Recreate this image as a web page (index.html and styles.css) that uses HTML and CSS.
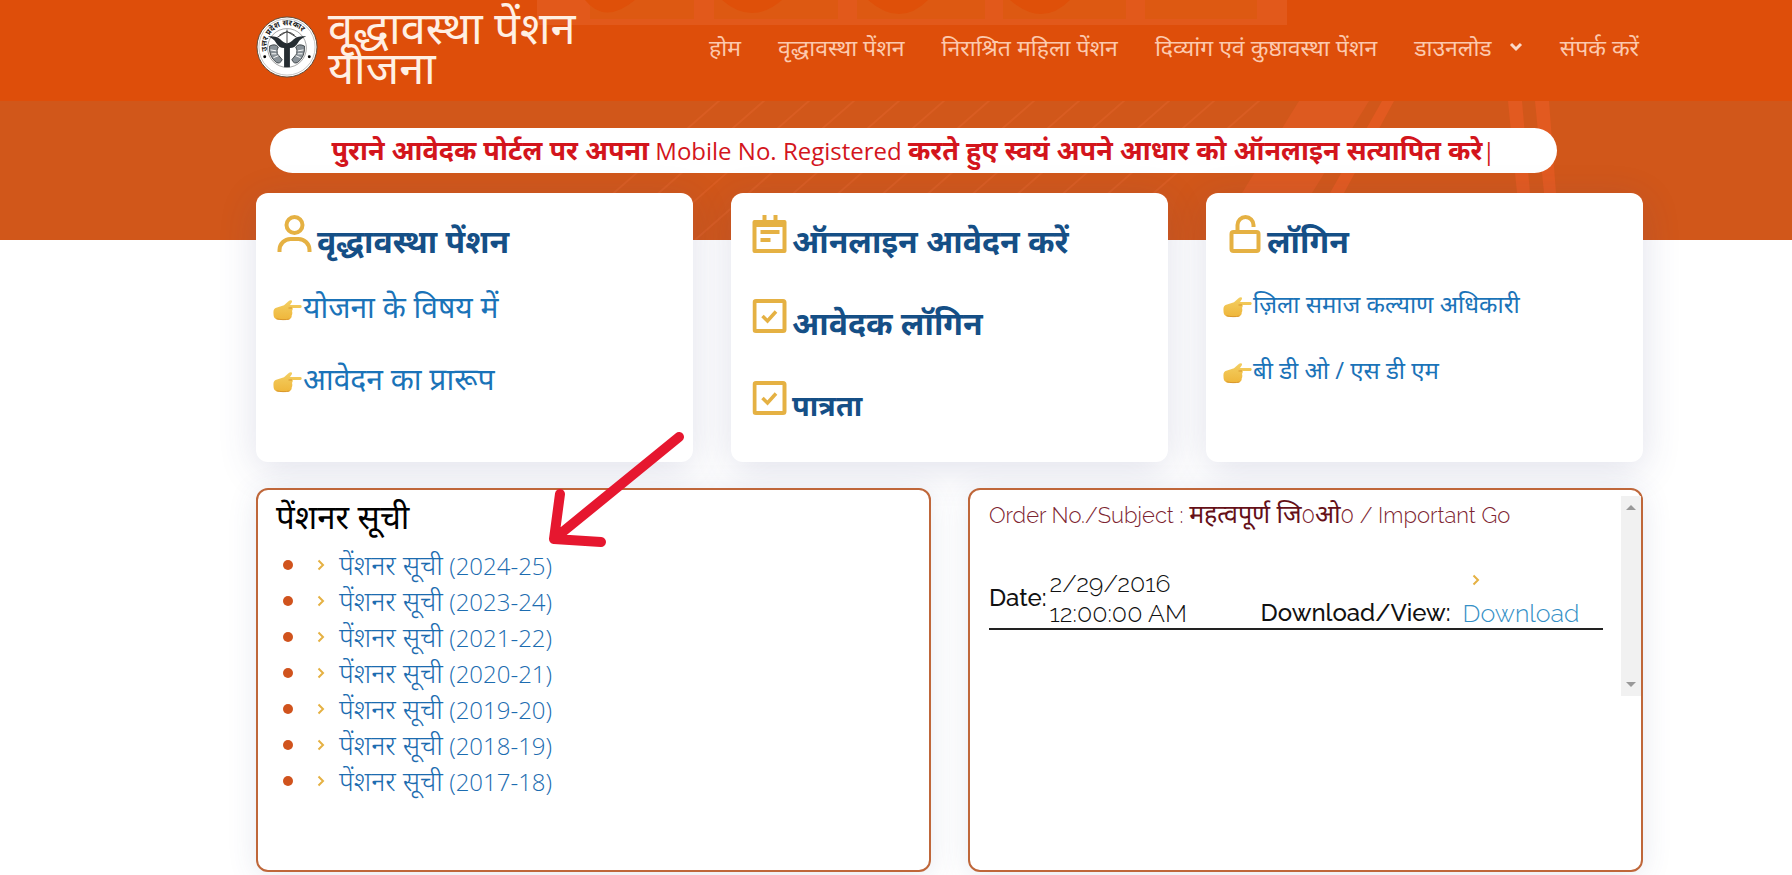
FILE: index.html
```html
<!DOCTYPE html>
<html lang="hi">
<head>
<meta charset="utf-8">
<title>वृद्धावस्था पेंशन योजना</title>
<meta name="viewport" content="width=device-width, initial-scale=1">
<link rel="stylesheet" href="styles.css">
</head>
<body>
<svg width="0" height="0" class="defs" aria-hidden="true">
  <defs>
    <linearGradient id="skin" x1="0" y1="0" x2="0" y2="1"><stop offset="0" stop-color="#f3cf63"/><stop offset="1" stop-color="#efb63a"/></linearGradient>
    <symbol id="hand" viewBox="0 0 30 22">
      <path d="M28 6H17.500L19.500 3C20 .8 17.500 1 16 2.200L11.500 6.200 3 9C1 10 .8 12 1 15c.2 3.400 1 4.900 4 5.400 3.800.6 8 .8 11 .2 2.200-.5 3.400-2 3.200-4 .8-1.600.8-3.300.3-4.700.6-.7.900-1.900.7-2.900H28c1.600 0 1.600-3 0-3z" fill="url(#skin)"/>
      <path d="M19.500 9H16M4 19.800c4 1 9 1.200 13 .2" fill="none" stroke="#d9972c" stroke-width="1"/>
    </symbol>
    <symbol id="check" viewBox="0 0 36 36">
      <rect x="2" y="2" width="30" height="30" rx="1.500" fill="none" stroke="#e5b143" stroke-width="4"/>
      <path d="M10 17l5 5 8.500-9.500" fill="none" stroke="#e5b143" stroke-width="3.500"/>
    </symbol>
    <symbol id="chev" viewBox="0 0 8 12">
      <path d="M1.500 1.500L6 6l-4.500 4.500" fill="none" stroke="#e5b143" stroke-width="2"/>
    </symbol>
  </defs>
</svg>

<svg class="hero" viewBox="0 0 1792 240" preserveAspectRatio="none" aria-hidden="true">
  <rect width="1792" height="240" fill="#d1571a"/>
  <path d="M560 240L720 100M605 240L765 100M650 240L810 100M695 240L855 100M740 240L900 100M785 240L945 100M830 240L990 100M875 240L1035 100M920 240L1080 100M965 240L1125 100M1010 240L1170 100M1055 240L1215 100M1100 240L1260 100" opacity=".7" stroke="#dd6026" stroke-width="2"/>
  <path d="M1299 101h70L1312 193h-70z" fill="#dd5a20"/>
  <path d="M1382 101h12l-50 92h-14zM1508 101h14l8 92h-13zM1535 101h14l7 92h-12z" fill="#e25a20"/>
  <rect width="1792" height="101" fill="#de4e0a"/>
  <rect x="537" width="750" height="25" fill="#e2591b"/>
  <g fill="#dd5912">
    <rect x="590" width="104" height="19"/><rect x="714" width="124" height="19"/><rect x="857" width="128" height="19"/><rect x="1003" width="123" height="19"/><rect x="1145" width="112" height="19"/>
  </g>
  <path d="M585 0q20 25 50 0zM722 0q30 26 60 0zM868 0q32 28 60 0zM1010 0q32 28 60 0z" fill="#df5009"/>
</svg>

<header class="header">
  <a class="brand" href="#">
    <svg class="emblem" viewBox="0 0 64 64" aria-hidden="true">
      <defs><path id="arc" d="M12 37a21 21 0 1 1 40 0"/></defs>
      <circle cx="32" cy="32" r="31" fill="#fff" stroke="#5c4a3a" stroke-width="1"/>
      <circle cx="32" cy="32" r="29" fill="none" stroke="#999" stroke-width=".6"/>
      <circle cx="32" cy="33" r="20" fill="none" stroke="#666" stroke-width=".6"/>
      <text class="emblem-text"><textPath href="#arc" startOffset="1">उत्तर प्रदेश सरकार</textPath></text>
      <path d="M12 21q9-1 13 3t7 4q3 0 7-4t13-3q-6 2-9 7t-8 5v20h-6V33q-5 0-8-5t-9-7z" fill="#252c31"/>
      <path d="M24 20q8-7 16 0M32 14v14M22 22l10-6 10 6" fill="none" stroke="#444" stroke-width="1"/>
      <path d="M14 31q6-3 9 1-2 3-1 7l5 6q-2 5-6 3-8-6-7-17zM50 31q-6-3-9 1 2 3 1 7l-5 6q2 5 6 3 8-6 7-17z" fill="#8a9298" stroke="#262c30" stroke-width=".8"/>
      <path d="M15 35l6 1M16 39l5 0M18 43l5-2M49 35l-6 1M48 39l-5 0M46 43l-5-2" stroke="#fff"/>
      <circle cx="9" cy="42" r="1.500"/><circle cx="55" cy="42" r="1.500"/>
    </svg>
    <span class="brand-name">वृद्धावस्था पेंशन योजना</span>
  </a>
  <nav class="nav">
    <a href="#">होम</a>
    <a href="#">वृद्धावस्था पेंशन</a>
    <a href="#">निराश्रित महिला पेंशन</a>
    <a href="#">दिव्यांग एवं कुष्ठावस्था पेंशन</a>
    <a href="#" class="drop">डाउनलोड
      <svg width="14" height="10" viewBox="0 0 14 10" aria-hidden="true"><path d="M2 2l5 5 5-5" fill="none" stroke="#fbd9c8" stroke-width="3"/></svg></a>
    <a href="#">संपर्क करें</a>
  </nav>
</header>

<main class="main">
  <p class="notice"><b>पुराने आवेदक पोर्टल पर अपना</b> Mobile No. Registered <b>करते हुए स्वयं अपने आधार को ऑनलाइन सत्यापित करे</b>|</p>

  <section class="cards">
    <article class="card">
      <h2 class="title"><svg class="ico" viewBox="0 0 36 40" aria-hidden="true"><g fill="none" stroke="#e5b143" stroke-width="4"><circle cx="18" cy="11" r="8"/><path d="M3 38v-2a11 11 0 0 1 11-11h8a11 11 0 0 1 11 11v2"/></g></svg>वृद्धावस्था पेंशन</h2>
      <ul class="links large">
        <li><svg class="hand" aria-hidden="true"><use href="#hand"/></svg><a href="#">योजना के विषय में</a></li>
        <li><svg class="hand" aria-hidden="true"><use href="#hand"/></svg><a href="#">आवेदन का प्रारूप</a></li>
      </ul>
    </article>
    <article class="card stack">
      <h2 class="title"><svg class="ico" viewBox="0 0 36 40" aria-hidden="true"><path d="M3 8h30v29H3z" fill="none" stroke="#e5b143" stroke-width="4" stroke-linejoin="round"/><path d="M3 6h30v7H3zM11 1h4v6h-4zM22 1h4v6h-4zM9 16h19v4H9zM9 24h10v4H9z" fill="#e5b143"/></svg><a href="#">ऑनलाइन आवेदन करें</a></h2>
      <h2 class="title"><svg class="ico" viewBox="0 0 36 40" aria-hidden="true"><use href="#check" x="1" y="3" width="36" height="36"/></svg><a href="#">आवेदक लॉगिन</a></h2>
      <h2 class="title small"><svg class="ico" viewBox="0 0 36 40" aria-hidden="true"><use href="#check" x="1" y="3" width="36" height="36"/></svg><a href="#">पात्रता</a></h2>
    </article>
    <article class="card">
      <h2 class="title"><svg class="ico" viewBox="0 0 36 40" aria-hidden="true"><g fill="none" stroke="#e5b143" stroke-width="4"><rect x="5" y="18" width="27" height="19" rx="2"/><path d="M11 18v-7a8 8 0 0 1 16 0v2"/></g></svg>लॉगिन</h2>
      <ul class="links">
        <li><svg class="hand" aria-hidden="true"><use href="#hand"/></svg><a href="#">ज़िला समाज कल्याण अधिकारी</a></li>
        <li><svg class="hand" aria-hidden="true"><use href="#hand"/></svg><a href="#">बी डी ओ / एस डी एम</a></li>
      </ul>
    </article>
  </section>

  <section class="panels">
    <div class="panel">
      <h2 class="panel-title">पेंशनर सूची</h2>
      <ul class="years">
        <li><svg class="chev" aria-hidden="true"><use href="#chev"/></svg><a href="#"><span>पेंशनर सूची</span> (2024-25)</a></li>
        <li><svg class="chev" aria-hidden="true"><use href="#chev"/></svg><a href="#"><span>पेंशनर सूची</span> (2023-24)</a></li>
        <li><svg class="chev" aria-hidden="true"><use href="#chev"/></svg><a href="#"><span>पेंशनर सूची</span> (2021-22)</a></li>
        <li><svg class="chev" aria-hidden="true"><use href="#chev"/></svg><a href="#"><span>पेंशनर सूची</span> (2020-21)</a></li>
        <li><svg class="chev" aria-hidden="true"><use href="#chev"/></svg><a href="#"><span>पेंशनर सूची</span> (2019-20)</a></li>
        <li><svg class="chev" aria-hidden="true"><use href="#chev"/></svg><a href="#"><span>पेंशनर सूची</span> (2018-19)</a></li>
        <li><svg class="chev" aria-hidden="true"><use href="#chev"/></svg><a href="#"><span>पेंशनर सूची</span> (2017-18)</a></li>
      </ul>
      <svg class="pointer" viewBox="0 0 136 120" aria-hidden="true"><path d="M131 7L6 109M12 64L6 109L53 112" fill="none" stroke="#e6172f" stroke-width="10" stroke-linecap="round" stroke-linejoin="round"/></svg>
    </div>
    <div class="panel orders">
      <div class="order-list">
        <p class="subject">Order No./Subject : <span>महत्वपूर्ण जि</span>0<span>ओ</span>0 / Important Go</p>
        <div class="order">
          <b class="date-label">Date:</b>
          <span class="date">2/29/2016 12:00:00 AM</span>
          <b class="view-label">Download/View:</b>
          <span class="view"><svg class="chev" aria-hidden="true"><use href="#chev"/></svg><a href="#">Download</a></span>
        </div>
      </div>
      <div class="scroll" aria-hidden="true"><i class="up"></i><i class="down"></i></div>
    </div>
  </section>
</main>
</body>
</html>
```

FILE: styles.css
```css
* { box-sizing: border-box; }
body {
  margin: 0;
  min-height: 100vh;
  background: #fff;
  color: #111;
  font-family: "Open Sans", "Noto Sans", "Noto Sans Devanagari", sans-serif;
  position: relative;
  overflow-x: hidden;
}
a { color: inherit; text-decoration: none; }
h2, p, ul { margin: 0; padding: 0; }
.defs { position: absolute; }
.hero { position: absolute; top: 0; left: 0; width: 100%; height: 240px; z-index: -1; }

.header {
  display: flex;
  justify-content: space-between;
  padding: 0 153px 0 256px;
  height: 101px;
}
.brand { display: flex; align-items: center; gap: 10px; width: 360px; height: 94px; color: #fff0e4; }
.emblem { flex: none; width: 62px; height: 62px; overflow: visible; }
.emblem-text { font-size: 8px; font-weight: 700; fill: #222; }
.brand-name { font-size: 45px; line-height: 40px; }
.nav { display: flex; gap: 37px; align-items: center; height: 94px; font-size: 23px; color: #fcc9ae; white-space: nowrap; }
.drop { display: flex; align-items: center; gap: 17px; }

.main { padding: 27px 149px 0 256px; }
.notice {
  margin: 0 86px 20px 14px;
  height: 45px;
  border-radius: 23px;
  background: #fff;
  color: #d3151c;
  font-size: 24px;
  line-height: 45px;
  text-align: center;
  white-space: nowrap;
}
.notice b { font-size: 27px; line-height: 40px; }
.cards { display: grid; grid-template-columns: repeat(3, 1fr); gap: 38px; }
.card {
  min-height: 269px;
  padding: 21px 16px;
  border-radius: 12px;
  background: #fff;
  box-shadow: 0 8px 38px rgba(60, 70, 130, .16);
}
.title { display: flex; height: 56px; font-size: 32px; line-height: 54px; color: #154f86; white-space: nowrap; }
.stack { display: flex; flex-direction: column; gap: 26px; }
.title.small { font-size: 29px; }
.ico { flex: none; width: 45px; height: 40px; }
.links { list-style: none; font-size: 24px; color: #1a73b8; }
.links li { display: flex; align-items: center; height: 66px; }
.links.large { font-size: 30px; }
.links.large li { height: 72px; }
.hand { width: 31px; height: 22px; margin-top: 8px; }

.panels { display: grid; grid-template-columns: 1fr 1fr; gap: 37px; margin-top: 26px; }
.panel {
  position: relative;
  height: 384px;
  border: 2px solid #bf673a;
  border-radius: 12px;
  background: #fff;
  box-shadow: 0 4px 30px rgba(60, 70, 130, .12);
}
.panel-title { padding-left: 18px; font-size: 33px; font-weight: 400; line-height: 54px; color: #000; }
.years { margin-top: 3px; list-style: none; font-size: 24px; font-weight: 300; color: #1c6cb0; }
.years li { display: flex; align-items: center; height: 36px; padding-left: 25px; line-height: 36px; }
.years li::before { content: ""; width: 10px; height: 10px; border-radius: 50%; background: #d0531d; }
.years span { font-size: 27px; }
.chev { width: 8px; height: 12px; }
.years .chev { margin: 0 14px 0 24px; }
.pointer { position: absolute; left: 290px; top: -60px; width: 136px; height: 120px; z-index: 2; }

.orders { display: flex; justify-content: space-between; font-family: Raleway, Lato, "Noto Sans", sans-serif; font-weight: 300; font-variant-numeric: oldstyle-nums; }
.order-list { flex: 1; padding: 7px 18px 0 19px; }
.subject { font-size: 22px; line-height: 34px; color: #7d2430; white-space: nowrap; }
.subject span { font-size: 25px; font-weight: 400; color: #651018; }
.order {
  display: flex;
  align-items: center;
  margin-top: 36px;
  border-bottom: 2px solid #222;
  font-size: 24px;
  line-height: 30px;
}
.order b { font-weight: 500; }
.date, .view { font-size: 25px; }
.date { width: 184px; padding-left: 3px; }
.view-label { align-self: end; margin-left: 30px; }
.view { display: flex; flex-direction: column; align-self: end; gap: 12px; margin-left: 12px; color: #3590c6; }
.view .chev { margin-left: 9px; }
.scroll { display: flex; flex-direction: column; justify-content: space-between; align-items: center; width: 20px; height: 200px; margin-top: 6px; padding: 9px 0; background: #f1f1f1; }
.up, .down { border: 5px solid transparent; }
.up { border-top: 0; border-bottom-color: #999; }
.down { border-bottom: 0; border-top-color: #999; }
```
